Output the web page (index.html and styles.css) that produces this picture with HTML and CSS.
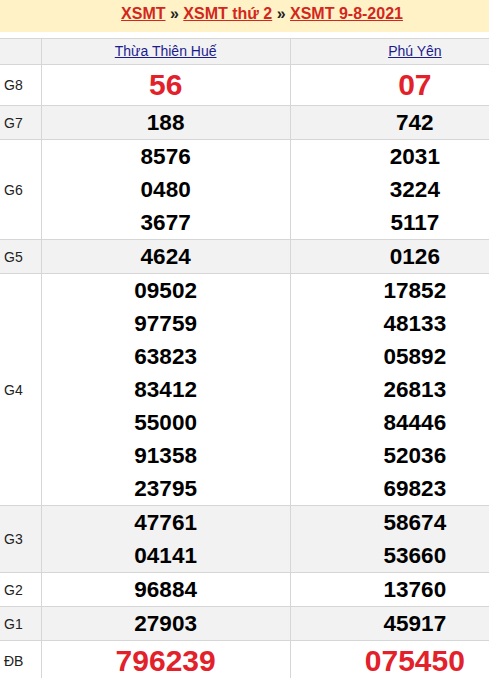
FILE: index.html
```html
<!DOCTYPE html>
<html lang="vi">
<head>
<meta charset="utf-8">
<title>XSMT 9-8-2021</title>
<link rel="stylesheet" href="styles.css">
</head>
<body>
<div class="page">
  <div class="title">
    <a href="#">XSMT</a> » <a href="#">XSMT thứ 2</a> » <a href="#">XSMT 9-8-2021</a>
  </div>
  <table class="results">
    <colgroup><col class="c-label"><col class="c-prov"><col class="c-prov"></colgroup>
    <tr class="head">
      <td></td>
      <td><a href="#">Thừa Thiên Huế</a></td>
      <td><a href="#">Phú Yên</a></td>
    </tr>
    <tr class="big">
      <td class="lbl">G8</td>
      <td><span class="n red">56</span></td>
      <td><span class="n red">07</span></td>
    </tr>
    <tr class="alt">
      <td class="lbl">G7</td>
      <td><span class="n">188</span></td>
      <td><span class="n">742</span></td>
    </tr>
    <tr>
      <td class="lbl">G6</td>
      <td><span class="n">8576</span><span class="n">0480</span><span class="n">3677</span></td>
      <td><span class="n">2031</span><span class="n">3224</span><span class="n">5117</span></td>
    </tr>
    <tr class="alt">
      <td class="lbl">G5</td>
      <td><span class="n">4624</span></td>
      <td><span class="n">0126</span></td>
    </tr>
    <tr>
      <td class="lbl">G4</td>
      <td><span class="n">09502</span><span class="n">97759</span><span class="n">63823</span><span class="n">83412</span><span class="n">55000</span><span class="n">91358</span><span class="n">23795</span></td>
      <td><span class="n">17852</span><span class="n">48133</span><span class="n">05892</span><span class="n">26813</span><span class="n">84446</span><span class="n">52036</span><span class="n">69823</span></td>
    </tr>
    <tr class="alt">
      <td class="lbl">G3</td>
      <td><span class="n">47761</span><span class="n">04141</span></td>
      <td><span class="n">58674</span><span class="n">53660</span></td>
    </tr>
    <tr>
      <td class="lbl">G2</td>
      <td><span class="n">96884</span></td>
      <td><span class="n">13760</span></td>
    </tr>
    <tr class="alt">
      <td class="lbl">G1</td>
      <td><span class="n">27903</span></td>
      <td><span class="n">45917</span></td>
    </tr>
    <tr class="big">
      <td class="lbl">ĐB</td>
      <td><span class="n red">796239</span></td>
      <td><span class="n red">075450</span></td>
    </tr>
  </table>
</div>
</body>
</html>
```

FILE: styles.css
```css
html, body {
  margin: 0;
  padding: 0;
  overflow: hidden;
  background: #fff;
}
.page {
  width: 540px;
  font-family: "Liberation Sans", Arial, sans-serif;
}
.title {
  height: 32px;
  line-height: 27px;
  background: #fff2c6;
  text-align: center;
  font-size: 16px;
  font-weight: bold;
  color: #222;
  padding-right: 16px;
}
.title a {
  color: #d3271d;
  text-decoration: underline;
}
.results {
  margin-top: 6px;
  width: 540px;
  border-collapse: collapse;
  table-layout: fixed;
}
.c-label { width: 41px; }
.c-prov { width: 249px; }
.results td {
  border: 1px solid #d6d6d6;
  padding: 0;
  text-align: center;
  vertical-align: middle;
}
.results tr td:first-child { border-left: none; }
.head td {
  background: #f2f2f2;
  line-height: 25px;
  font-size: 14px;
}
.head a {
  color: #1c1c8f;
  text-decoration: underline;
}
.alt td { background: #f2f2f2; }
.lbl {
  text-align: left !important;
  padding-left: 4px !important;
  font-size: 14px;
  color: #222;
}
.n {
  display: block;
  line-height: 33px;
  font-size: 22.5px;
  font-weight: bold;
  color: #000;
}
.big .n {
  line-height: 40px;
  font-size: 30px;
}
.n.red { color: #e2212a; }
```
